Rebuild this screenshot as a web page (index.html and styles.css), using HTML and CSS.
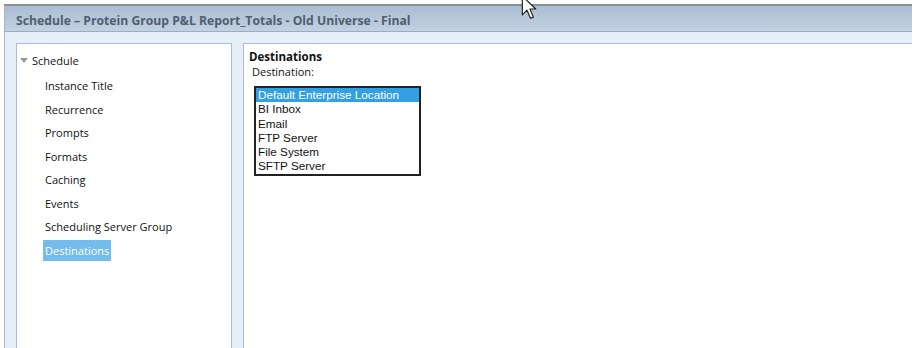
FILE: index.html
```html
<!DOCTYPE html>
<html>
<head>
<meta charset="utf-8">
<link rel="stylesheet" href="styles.css">
</head>
<body>
<div class="window">
  <div class="titlebar">Schedule – Protein Group P&amp;L Report_Totals - Old Universe - Final</div>
  <div class="content">
    <div class="nav">
      <div class="root"><span class="tri"></span>Schedule</div>
      <ul class="items">
        <li>Instance Title</li>
        <li>Recurrence</li>
        <li>Prompts</li>
        <li>Formats</li>
        <li>Caching</li>
        <li>Events</li>
        <li>Scheduling Server Group</li>
        <li><span class="sel">Destinations</span></li>
      </ul>
    </div>
    <div class="main">
      <div class="heading">Destinations</div>
      <div class="label">Destination:</div>
      <div class="listbox">
        <div class="opt active">Default Enterprise Location</div>
        <div class="opt">BI Inbox</div>
        <div class="opt">Email</div>
        <div class="opt">FTP Server</div>
        <div class="opt">File System</div>
        <div class="opt">SFTP Server</div>
      </div>
    </div>
  </div>
</div>
<svg class="cursor" width="19" height="28" viewBox="0 0 16 24"><path d="M1 1 L1 17 L5 13 L8 20 L10.5 19 L7.5 12 L12.5 12 Z" fill="#fff" stroke="#222" stroke-width="1" stroke-linejoin="round"/></svg>
</body>
</html>
```
FILE: styles.css
```css
html, body { margin: 0; padding: 0; background: #fff; }
body { position: relative; width: 916px; height: 348px; overflow: hidden; }
.window {
  margin: 4px 0 0 4px;
  width: 908px;
  height: 344px;
  border-top: 2px solid #8d8e92;
  border-left: 1px solid #a6b6cc;
  box-sizing: border-box;
  display: flex;
  flex-direction: column;
}
.titlebar {
  height: 26px;
  line-height: 26px;
  padding: 2px 0 0 11px;
  background: linear-gradient(#a9bdd3, #c3d1e0);
  border-bottom: 1px solid #98adc8;
  font-family: "Open Sans", sans-serif;
  font-weight: bold;
  font-size: 12.2px;
  color: #4f5e70;
  box-sizing: border-box;
}
.content {
  flex: 1;
  background: #e6eef7;
  padding: 11px 0 0 11px;
  display: flex;
  gap: 11px;
  min-height: 0;
}
.nav {
  width: 214px;
  background: #fff;
  border: 1px solid #a9bdd8;
  border-bottom: none;
  font-family: "Open Sans", sans-serif;
  font-size: 11px;
  color: #111;
}
.root { display: flex; align-items: center; padding: 8px 0 0 3px; height: 17px; }
.tri {
  width: 0; height: 0;
  border-left: 4px solid transparent;
  border-right: 4px solid transparent;
  border-top: 5px solid #9a9a9a;
  margin-right: 4px;
}
.items { list-style: none; margin: 0; padding: 5px 0 0 28px; }
.items li { height: 23.5px; line-height: 23.5px; }
.sel { background: #73bcec; color: #fff; padding: 3px 2px; margin-left: -2px; }
.main {
  flex: 1;
  background: #fff;
  border-top: 1px solid #a9bdd8;
  border-left: 1px solid #a9bdd8;
  padding: 6px 0 0 5px;
  font-family: "Liberation Sans", sans-serif;
  font-size: 11.7px;
  color: #111;
}
.heading { font-family: "Open Sans", sans-serif; font-weight: bold; font-size: 11.5px; line-height: 14px; }
.label { font-family: "Open Sans", sans-serif; font-size: 11px; line-height: 16px; padding-left: 3px; }
.listbox {
  margin: 6px 0 0 5px;
  width: 167px;
  border: 2px solid #222;
  padding: 0;
  box-sizing: border-box;
}
.opt { height: 14.3px; line-height: 14.3px; padding-left: 2px; }
.opt.active { background: #33a0e4; color: #fff; }
.cursor { position: absolute; left: 521px; top: -5px; }
```
